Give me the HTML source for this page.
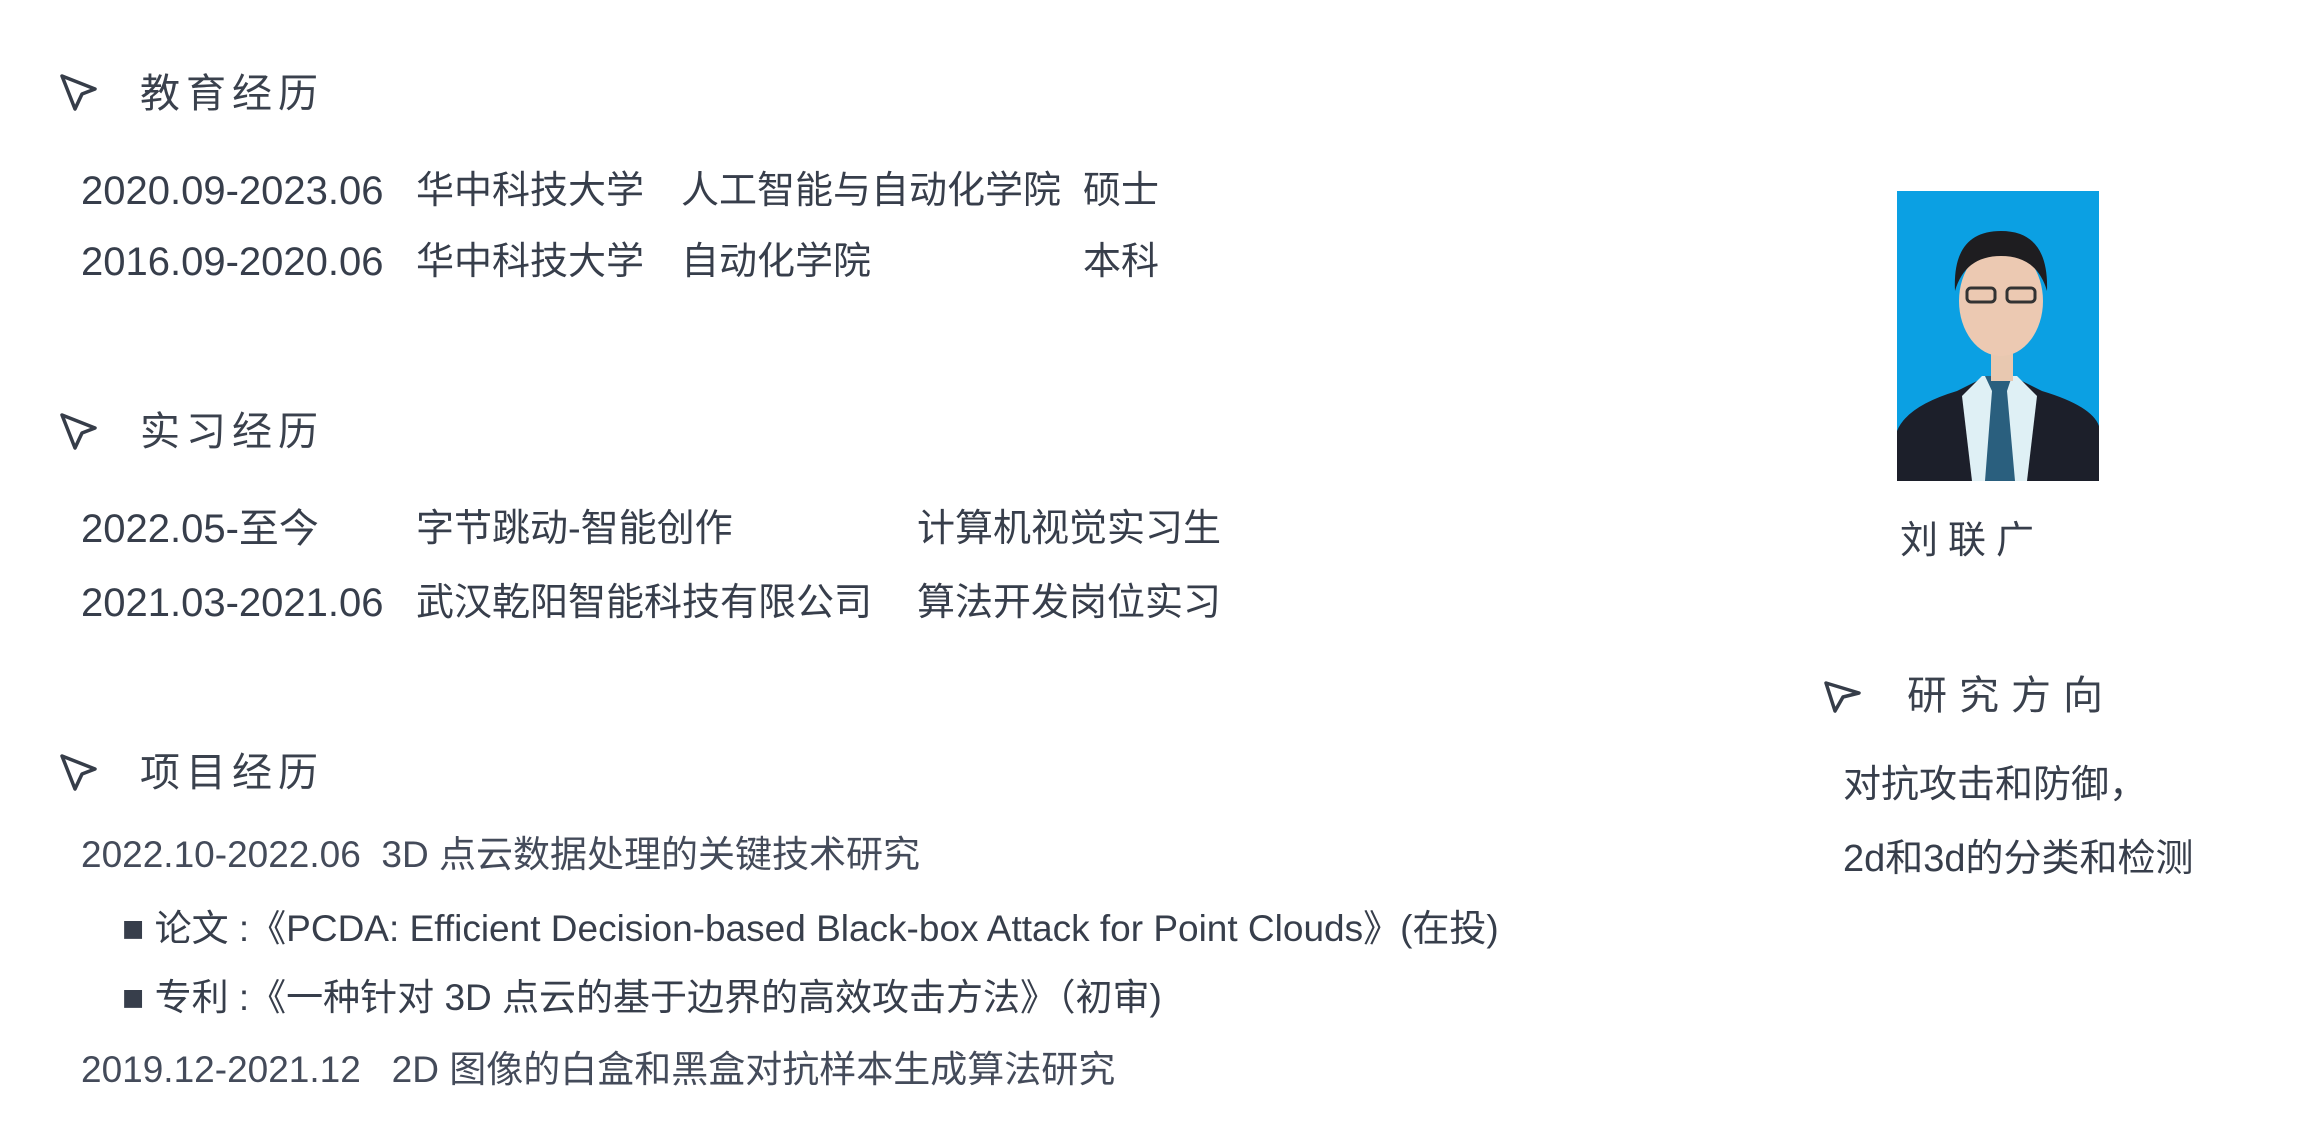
<!DOCTYPE html>
<html><head><meta charset="utf-8"><style>
body{margin:0;width:2306px;height:1134px;background:#fff;position:relative;overflow:hidden;font-family:"Liberation Sans","Noto Sans CJK SC",sans-serif;color:#373e4b}
.t{position:absolute;white-space:nowrap;line-height:1}
.h{font-size:40px;letter-spacing:6px;color:#3a414d}
.r{font-size:38px}
.d{font-size:40px}
.p{font-size:37px;color:#444b5a}
svg.i{position:absolute}
</style></head><body>
<svg class="i" style="left:58px;top:72px" width="42" height="42" viewBox="0 0 42 42"><path d="M4,4 L37,17 L24,22 L17,37 Z" fill="none" stroke="#363d49" stroke-width="3.5" stroke-linejoin="round"/></svg>
<div class="t h" style="left:140px;top:74px">教育经历</div>
<div class="t d" style="left:81px;top:171px">2020.09-2023.06</div>
<div class="t r" style="left:416px;top:172px">华中科技大学</div>
<div class="t r" style="left:681px;top:172px">人工智能与自动化学院</div>
<div class="t r" style="left:1083px;top:172px">硕士</div>
<div class="t d" style="left:81px;top:242px">2016.09-2020.06</div>
<div class="t r" style="left:416px;top:243px">华中科技大学</div>
<div class="t r" style="left:681px;top:243px">自动化学院</div>
<div class="t r" style="left:1083px;top:243px">本科</div>

<svg class="i" style="left:58px;top:411px" width="42" height="42" viewBox="0 0 42 42"><path d="M4,4 L37,17 L24,22 L17,37 Z" fill="none" stroke="#363d49" stroke-width="3.5" stroke-linejoin="round"/></svg>
<div class="t h" style="left:140px;top:412px">实习经历</div>
<div class="t d" style="left:81px;top:509px">2022.05-至今</div>
<div class="t r" style="left:416px;top:510px">字节跳动-智能创作</div>
<div class="t r" style="left:917px;top:510px">计算机视觉实习生</div>
<div class="t d" style="left:81px;top:583px">2021.03-2021.06</div>
<div class="t r" style="left:416px;top:584px">武汉乾阳智能科技有限公司</div>
<div class="t r" style="left:917px;top:584px">算法开发岗位实习</div>

<svg class="i" style="left:58px;top:752px" width="42" height="42" viewBox="0 0 42 42"><path d="M4,4 L37,17 L24,22 L17,37 Z" fill="none" stroke="#363d49" stroke-width="3.5" stroke-linejoin="round"/></svg>
<div class="t h" style="left:140px;top:753px">项目经历</div>
<div class="t p" style="left:81px;top:836px">2022.10-2022.06&nbsp; 3D 点云数据处理的关键技术研究</div>
<div class="t p" style="left:122px;top:910px;color:#373e4b">■ 论文 :《PCDA: Efficient Decision-based Black-box Attack for Point Clouds》(在投)</div>
<div class="t p" style="left:122px;top:979px;color:#373e4b">■ 专利 :《一种针对 3D 点云的基于边界的高效攻击方法》（初审)</div>
<div class="t p" style="left:81px;top:1051px">2019.12-2021.12&nbsp;&nbsp; 2D 图像的白盒和黑盒对抗样本生成算法研究</div>

<svg style="position:absolute;left:1897px;top:191px" width="202" height="290" viewBox="0 0 202 290">
<rect width="202" height="290" fill="#0ba0e3"/>
<path d="M0,240 Q10,215 60,200 L90,185 L115,185 L145,200 Q195,215 202,235 L202,290 L0,290 Z" fill="#1c1f2a"/>
<path d="M65,205 L85,185 L120,185 L140,205 L130,290 L75,290 Z" fill="#dff0f5"/>
<path d="M88,185 L115,185 L110,200 L118,290 L88,290 L95,200 Z" fill="#2a5f7e"/>
<rect x="94" y="150" width="22" height="40" fill="#e8c8b0"/>
<ellipse cx="104" cy="110" rx="42" ry="55" fill="#ecc9b2"/>
<path d="M58,100 Q55,40 104,40 Q152,40 150,100 Q140,65 104,65 Q68,65 58,100 Z" fill="#1e1d20"/>
<rect x="70" y="97" width="28" height="14" rx="4" fill="none" stroke="#333" stroke-width="3"/>
<rect x="110" y="97" width="28" height="14" rx="4" fill="none" stroke="#333" stroke-width="3"/>
</svg>
<div class="t" style="left:1900px;top:522px;font-size:38px;letter-spacing:10px">刘联广</div>

<svg class="i" style="left:1823px;top:677px" width="42" height="40" viewBox="0 0 42 40"><path d="M3,6 L36,16 L20,20 L12,34 Z" fill="none" stroke="#363d49" stroke-width="3.5" stroke-linejoin="round"/></svg>
<div class="t h" style="left:1907px;top:676px;letter-spacing:12px">研究方向</div>
<div class="t" style="left:1843px;top:766px;font-size:38px">对抗攻击和防御，</div>
<div class="t" style="left:1843px;top:840px;font-size:38px">2d和3d的分类和检测</div>
</body></html>
